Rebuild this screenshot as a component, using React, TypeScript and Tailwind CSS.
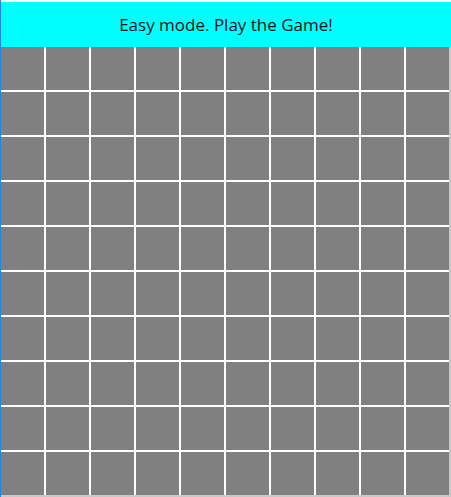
const ROWS = 10;
const COLS = 10;

export default function App() {
  const cells = Array.from({ length: ROWS * COLS }, (_, i) => i);

  return (
    <div className="h-[497px] w-[451px] overflow-hidden border-l border-[#1e88e5] bg-white">
      <div className="mt-[2px] flex h-[45px] items-center justify-center bg-[#00ffff] pt-[1px] font-['Open_Sans',sans-serif] text-[17px] text-[#111]">
        Easy mode. Play the Game!
      </div>
      <div className="w-[450px] border-b-2 border-r-2 border-[#c8c8c8]">
        <div className="grid grid-cols-[repeat(10,43px)] gap-[2px]">
          {cells.map((i) => (
            <div key={i} className="h-[43px] w-[43px] bg-[#808080]" />
          ))}
        </div>
      </div>
    </div>
  );
}
